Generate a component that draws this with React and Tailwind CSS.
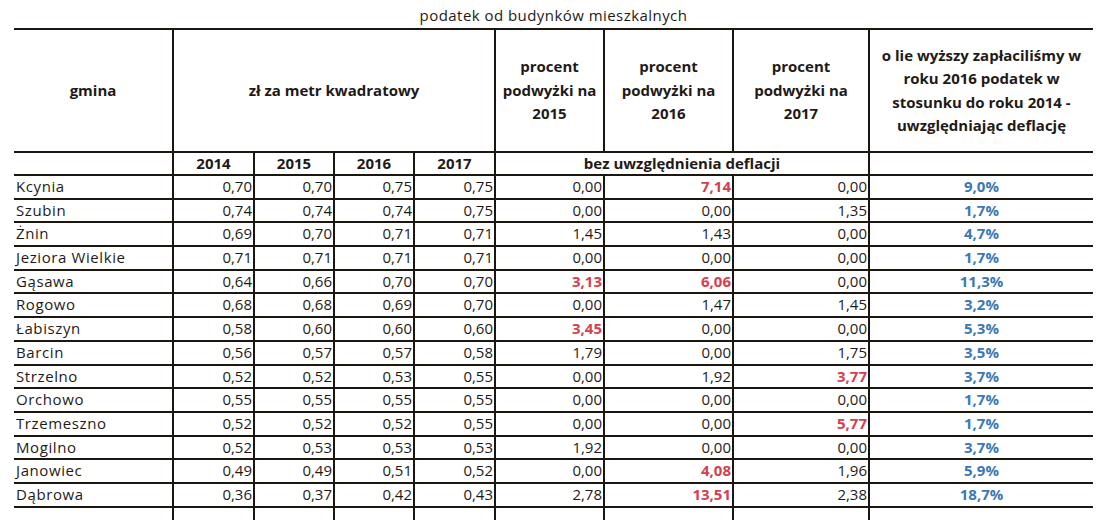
import React from "react";

const cols = "grid grid-cols-[160px_81px_80px_80px_81px_109px_129px_136px_223px]";
const line = "border-[#1c1611]";

// [gmina, 2014, 2015, 2016, 2017, p15, p16, p17, deflacja]; last item: indexes shown in red
const rows = [
  ["Kcynia", "0,70", "0,70", "0,75", "0,75", "0,00", "7,14", "0,00", "9,0%", [6]],
  ["Szubin", "0,74", "0,74", "0,74", "0,75", "0,00", "0,00", "1,35", "1,7%", []],
  ["Żnin", "0,69", "0,70", "0,71", "0,71", "1,45", "1,43", "0,00", "4,7%", []],
  ["Jeziora Wielkie", "0,71", "0,71", "0,71", "0,71", "0,00", "0,00", "0,00", "1,7%", []],
  ["Gąsawa", "0,64", "0,66", "0,70", "0,70", "3,13", "6,06", "0,00", "11,3%", [5, 6]],
  ["Rogowo", "0,68", "0,68", "0,69", "0,70", "0,00", "1,47", "1,45", "3,2%", []],
  ["Łabiszyn", "0,58", "0,60", "0,60", "0,60", "3,45", "0,00", "0,00", "5,3%", [5]],
  ["Barcin", "0,56", "0,57", "0,57", "0,58", "1,79", "0,00", "1,75", "3,5%", []],
  ["Strzelno", "0,52", "0,52", "0,53", "0,55", "0,00", "1,92", "3,77", "3,7%", [7]],
  ["Orchowo", "0,55", "0,55", "0,55", "0,55", "0,00", "0,00", "0,00", "1,7%", []],
  ["Trzemeszno", "0,52", "0,52", "0,52", "0,55", "0,00", "0,00", "5,77", "1,7%", [7]],
  ["Mogilno", "0,52", "0,53", "0,53", "0,53", "1,92", "0,00", "0,00", "3,7%", []],
  ["Janowiec", "0,49", "0,49", "0,51", "0,52", "0,00", "4,08", "1,96", "5,9%", [6]],
  ["Dąbrowa", "0,36", "0,37", "0,42", "0,43", "2,78", "13,51", "2,38", "18,7%", [6]],
];

const HeaderRow = () => (
  <div className={`${cols} h-[125px] border-t-2 border-b-2 ${line} font-bold text-center leading-[23.5px]`}>
    <div className={`border-r-2 ${line} flex items-center justify-center`}>gmina</div>
    <div className={`col-span-4 border-r-2 ${line} flex items-center justify-center`}>zł za metr kwadratowy</div>
    {["2015", "2016", "2017"].map((y) => (
      <div key={y} className={`border-r-2 ${line} flex items-center justify-center`}>
        <div>
          procent
          <br />
          podwyżki na
          <br />
          {y}
        </div>
      </div>
    ))}
    <div className="flex items-center justify-center">
      <div>
        o lie wyższy zapłaciliśmy w
        <br />
        roku 2016 podatek w
        <br />
        stosunku do roku 2014 -
        <br />
        uwzględniając deflację
      </div>
    </div>
  </div>
);

const YearRow = () => (
  <div className={`${cols} h-[23px] border-b-2 ${line} font-bold text-center leading-[21px]`}>
    <div className={`border-r-2 ${line}`} />
    {["2014", "2015", "2016", "2017"].map((y) => (
      <div key={y} className={`border-r-2 ${line}`}>{y}</div>
    ))}
    <div className={`col-span-3 border-r-2 ${line}`}>bez uwzględnienia deflacji</div>
    <div />
  </div>
);

const DataRow = ({ row }) => {
  const red = row[9];
  return (
    <div className={`${cols} h-[23.7px] border-b-2 ${line} leading-[21px]`}>
      <div className={`border-r-2 ${line} pl-[2px] tracking-[0.6px]`}>{row[0]}</div>
      {row.slice(1, 8).map((v, i) => (
        <div
          key={i}
          className={`border-r-2 ${line} text-right pr-[1px] ${red.includes(i + 1) ? "font-bold text-[#d5404e]" : ""}`}
        >
          {v}
        </div>
      ))}
      <div className="text-center font-bold text-[#3b78b5]">{row[8]}</div>
    </div>
  );
};

export default function App() {
  return (
    <div className="w-[1100px] h-[520px] overflow-hidden bg-white text-[#1f1a17] text-[15px] font-['Open_Sans',sans-serif]">
      <div className="ml-[14px] w-[1079px]">
        <div className="h-[28px] text-center leading-[30px] tracking-[0.45px]">podatek od budynków mieszkalnych</div>
        <HeaderRow />
        <YearRow />
        {rows.map((r) => (
          <DataRow key={r[0]} row={r} />
        ))}
        <div className={`${cols} h-[14px]`}>
          {Array.from({ length: 8 }).map((_, i) => (
            <div key={i} className={`border-r-2 ${line}`} />
          ))}
          <div />
        </div>
      </div>
    </div>
  );
}
